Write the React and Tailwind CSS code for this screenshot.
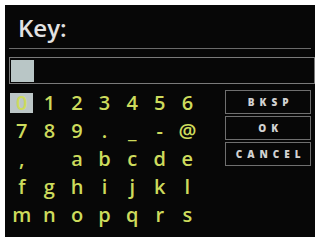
import React from "react";

const rows = [
  ["0", "1", "2", "3", "4", "5", "6"],
  ["7", "8", "9", ".", "_", "-", "@"],
  [",", " ", "a", "b", "c", "d", "e"],
  ["f", "g", "h", "i", "j", "k", "l"],
  ["m", "n", "o", "p", "q", "r", "s"],
];

export default function App() {
  return (
    <div
      className="w-[315px] h-[237px] bg-white pl-[5px] pt-[5px] flex overflow-hidden"
      style={{ fontFamily: '"Open Sans", "Noto Sans", sans-serif' }}
    >
      <div className="flex-1 bg-[#070707] flex flex-col">
        <div className="h-[43px] pl-[13px] pt-[11px]">
          <div className="text-[24px] leading-[24px] font-semibold text-[#e2e2e2]">Key:</div>
        </div>
        <div className="mx-[4px] h-[1px] bg-[#6a6a6a]" />
        <div className="mt-[8px] ml-[4px] h-[27px] border border-[#7a7a7a] flex items-center pl-[1px]">
          <div className="w-[23px] h-[22px] bg-[#b9c6c6]" />
        </div>
        <div className="flex mt-[5px]">
          <div className="ml-[3px] grid grid-cols-[repeat(7,27.6px)] grid-rows-[repeat(5,28px)]">
            {rows.flat().map((c, i) => (
              <div
                key={i}
                className="flex items-center justify-center text-[20px] leading-[28px] font-semibold text-[#cddb5c]"
              >
                {i === 0 ? (
                  <span className="w-[23px] h-[20px] bg-[#bcc6c6] flex items-center justify-center leading-none">
                    {c}
                  </span>
                ) : (
                  c
                )}
              </div>
            ))}
          </div>
          <div className="ml-[24px] mt-[1px] w-[86px] flex flex-col gap-[2px]">
            {["BKSP", "OK", "CANCEL"].map((t) => (
              <div
                key={t}
                className="h-[24px] border border-[#6f6f6f] flex items-center justify-center text-[10px] font-extrabold tracking-[5px] pl-[5px] text-[#d2d2d2]"
              >
                {t}
              </div>
            ))}
          </div>
        </div>
      </div>
    </div>
  );
}
